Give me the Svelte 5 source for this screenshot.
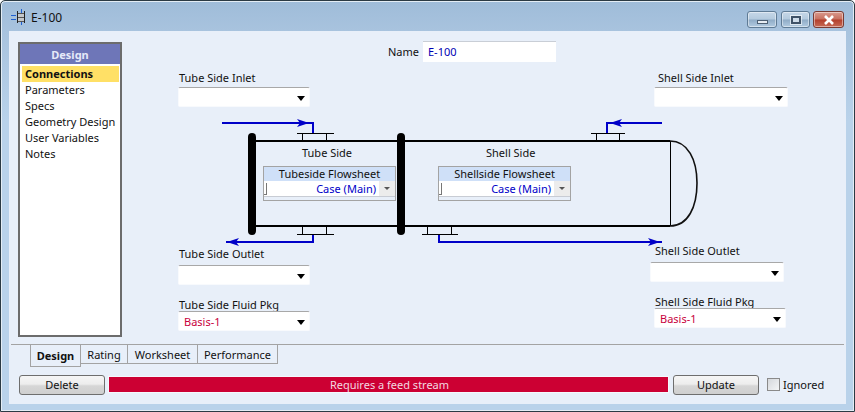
<script lang="ts">
	// canvas origin in page coords: x 122, y 31
	const combos = [
		{ label: 'Tube Side Inlet', lx: 57, ly: 39, x: 56, y: 56, w: 132, h: 20, value: '' },
		{ label: 'Shell Side Inlet', lx: 536, ly: 39, x: 532, y: 56, w: 134, h: 20, value: '' },
		{ label: 'Tube Side Outlet', lx: 57, ly: 215, x: 56, y: 234, w: 132, h: 20, value: '' },
		{ label: 'Tube Side Fluid Pkg', lx: 57, ly: 266, x: 56, y: 280, w: 132, h: 20, value: 'Basis-1' },
		{ label: 'Shell Side Outlet', lx: 533, ly: 212, x: 528, y: 231, w: 134, h: 20, value: '' },
		{ label: 'Shell Side Fluid Pkg', lx: 533, ly: 263, x: 532, y: 277, w: 132, h: 20, value: 'Basis-1' }
	];
	const flowsheets = [
		{ title: 'Tubeside Flowsheet', x: 141, y: 135 },
		{ title: 'Shellside Flowsheet', x: 316, y: 135 }
	];
	const menu = ['Connections', 'Parameters', 'Specs', 'Geometry Design', 'User Variables', 'Notes'];
	const tabs = [
		{ name: 'Design', w: 51 },
		{ name: 'Rating', w: 48 },
		{ name: 'Worksheet', w: 71 },
		{ name: 'Performance', w: 81 }
	];
</script>

<div class="window">
	<header class="titlebar">
		<svg class="app-icon" width="16" height="18" viewBox="0 0 16 18">
			<rect x="6" y="6" width="8" height="7" fill="#c4c8cc" />
			<path d="M6 5.500h8M6 13.500h8M6 9.500h8" stroke="#555" fill="none" />
			<path d="M6.500 3v12M13.500 3v12" stroke="#222" fill="none" />
			<path d="M10.500 1v4M10.500 14v3M0 7.500h5M0 11.500h5" stroke="#1f5fd0" fill="none" />
		</svg>
		<span class="title">E-100</span>
		<div class="controls">
			<div class="ctl"><span class="min"></span></div>
			<div class="ctl"><span class="max"></span></div>
			<div class="ctl close">
				<svg width="14" height="10" viewBox="0 0 14 10"><path d="M3 1l8 8M11 1l-8 8" stroke="#fff" stroke-width="2.6" fill="none" /></svg>
			</div>
		</div>
	</header>

	<main class="panel">
		<div class="design">
			<nav class="side">
				<div class="side-head">Design</div>
				<ul>
					{#each menu as item, i}
						<li class:active={i === 0}>{item}</li>
					{/each}
				</ul>
			</nav>

			<div class="canvas">
				<svg class="pid" width="724" height="313" viewBox="122 31 724 313" fill="none">
					<!-- vessel -->
					<path d="M252 141H670M252 226H670" stroke="#000" stroke-width="2" />
					<path d="M670.500 141V226" stroke="#000" />
					<path d="M670 141C688 141 697 160 697 183C697 207 688 226 670 226" stroke="#111" stroke-width="1.6" />
					<rect x="248" y="133" width="8" height="102" rx="4" fill="#000" />
					<rect x="397" y="133" width="8" height="102" rx="4" fill="#000" />
					<!-- nozzles -->
					<path d="M297 133.500H334M302.500 133V141M326.500 133V141" stroke="#000" />
					<path d="M297 234.500H334M302.500 226V234M326.500 226V234" stroke="#000" />
					<path d="M591 133.500H625M596.500 133V141M619.500 133V141" stroke="#000" />
					<path d="M422 234.500H458M427.500 226V234M451.500 226V234" stroke="#000" />
					<!-- streams -->
					<g stroke="#0000c8" stroke-width="2">
						<path d="M222 123H313V133" />
						<path d="M313 235V242H226" />
						<path d="M607 133V123H662" />
						<path d="M439 235V242H662" />
					</g>
					<g fill="#0000c8">
						<path d="M297 119L309 123L297 127L300 123Z" />
						<path d="M239 238L227 242L239 246L236 242Z" />
						<path d="M622 119L610 123L622 127L619 123Z" />
						<path d="M648 238L660 242L648 246L651 242Z" />
					</g>
				</svg>

				<span class="lbl name-lbl">Name</span>
				<div class="name-input">E-100</div>
				<span class="lbl side-lbl tube">Tube Side</span>
				<span class="lbl side-lbl shell">Shell Side</span>

				{#each flowsheets as f}
					<div class="flowsheet" style="left:{f.x}px;top:{f.y}px">
						<div class="fs-head">{f.title}</div>
						<div class="fs-row">
							<span class="caret"></span>
							<span class="fs-value">Case (Main)</span>
							<span class="fs-btn"></span>
						</div>
					</div>
				{/each}

				{#each combos as c}
					<span class="lbl" style="left:{c.lx}px;top:{c.ly}px">{c.label}</span>
					<div class="combo" style="left:{c.x}px;top:{c.y}px;width:{c.w}px;height:{c.h}px">
						<span class="combo-val">{c.value}</span>
						<span class="arrow"></span>
					</div>
				{/each}
			</div>
		</div>

		<div class="tabs">
			{#each tabs as t, i}
				<div class="tab" class:on={i === 0} style="width:{t.w}px">{t.name}</div>
			{/each}
		</div>

		<footer class="foot">
			<button type="button" class="btn">Delete</button>
			<div class="status">Requires a feed stream</div>
			<button type="button" class="btn">Update</button>
			<label class="ignored"><span class="box"></span>Ignored</label>
		</footer>
	</main>
</div>

<style>
	:global(body) {
		margin: 0;
		background: #fff;
	}

	.window {
		box-sizing: border-box;
		width: 855px;
		height: 412px;
		display: flex;
		flex-direction: column;
		border: 1px solid #2b3a44;
		border-radius: 5px 5px 0 0;
		background: linear-gradient(180deg, #9fbcd9 0, #a8c3de 30px, #b9d2ea 120px, #b9d2ea 100%);
		box-shadow: inset 0 0 0 1px #e4edf5;
		padding: 0 8px 7px 8px;
		font-family: 'Noto Sans', Tahoma, sans-serif;
		font-size: 11px;
		color: #111;
	}

	.titlebar {
		height: 30px;
		flex: none;
		display: flex;
		align-items: center;
		position: relative;
	}

	.app-icon {
		margin: 2px 4px 0 2px;
	}

	.title {
		font-size: 12px;
		margin-top: 2px;
	}

	.controls {
		margin-left: auto;
		margin-right: 2px;
		margin-top: 10px;
		display: flex;
		gap: 3px;
		align-self: flex-start;
	}

	.ctl {
		box-sizing: border-box;
		width: 30px;
		height: 17px;
		border: 1px solid #5f7b95;
		border-radius: 3px;
		background: linear-gradient(180deg, #c6d7e8 0, #b4cade 48%, #8fabc6 52%, #b2cbe1 100%);
		box-shadow: inset 0 0 0 1px rgb(255 255 255 / 0.45);
		display: flex;
		align-items: center;
		justify-content: center;
	}

	.ctl:nth-child(2) {
		width: 29px;
		margin-left: 1px;
	}

	.close {
		width: 31px;
		border-color: #7a3b33;
		background: linear-gradient(180deg, #d99a8e 0, #c8705f 48%, #b33f2c 52%, #c66a55 100%);
	}

	.min {
		width: 11px;
		height: 4px;
		margin-top: 4px;
		box-sizing: border-box;
		background: #e8eef4;
		border: 1px solid #4d6074;
	}

	.max {
		width: 10px;
		height: 8px;
		box-sizing: border-box;
		border: 2px solid #3f5267;
		background: #cfdce9;
		outline: 1px solid rgb(255 255 255 / 0.6);
	}

	.panel {
		flex: 1;
		display: flex;
		flex-direction: column;
		background: #e8eff9;
		min-height: 0;
	}

	.design {
		height: 313px;
		flex: none;
		display: flex;
		padding-left: 9px;
		box-sizing: border-box;
	}

	.side {
		box-sizing: border-box;
		width: 104px;
		height: 295px;
		margin-top: 11px;
		flex: none;
		border: 2px solid #6c6c6c;
		border-width: 1px 2px 2px 2px;
		background: #fff;
	}

	.side-head {
		height: 21px;
		margin-bottom: 1px;
		border-top: 1px solid #6c6c6c;
		box-sizing: border-box;
		background: #6e76b8;
		color: #e6eaf8;
		font-weight: 700;
		text-align: center;
		line-height: 21px;
	}

	ul {
		list-style: none;
		margin: 0;
		padding: 1px 1px 0 2px;
	}

	li {
		height: 16px;
		line-height: 15px;
		padding-left: 3px;
	}

	li.active {
		background: #ffe066;
		font-weight: 700;
	}

	.canvas {
		position: relative;
		flex: 1;
	}

	.pid {
		position: absolute;
		left: 0;
		top: 0;
	}

	.lbl {
		position: absolute;
		white-space: nowrap;
		line-height: 15px;
	}

	.name-lbl {
		left: 266px;
		top: 13px;
	}

	.tube {
		left: 180px;
		top: 114px;
	}

	.shell {
		left: 364px;
		top: 114px;
	}

	.name-input {
		position: absolute;
		left: 301px;
		top: 10px;
		box-sizing: border-box;
		width: 133px;
		height: 21px;
		background: #fff;
		border-top: 1px solid #c9ced6;
		color: #0000b4;
		padding-left: 5px;
		line-height: 20px;
	}

	.combo {
		position: absolute;
		box-sizing: border-box;
		background: #fff;
		border: 1px solid #f8fafd;
		border-top-color: #a8a8a8;
		border-radius: 2px;
		display: flex;
		align-items: center;
		padding-left: 5px;
	}

	.combo-val {
		color: #c8003c;
	}

	.arrow {
		position: absolute;
		right: 4px;
		top: 8px;
		width: 0;
		height: 0;
		border-left: 4px solid transparent;
		border-right: 4px solid transparent;
		border-top: 5px solid #000;
	}

	.flowsheet {
		position: absolute;
		box-sizing: border-box;
		width: 133px;
		height: 35px;
		border: 1px solid #a3a3a3;
		background: #e8eff9;
	}

	.fs-head {
		height: 14px;
		background: #cfe0f8;
		text-align: center;
		line-height: 13px;
	}

	.fs-row {
		height: 15px;
		margin-bottom: 1px;
		background: #fff;
		border-bottom: 1px solid #c8ccd4;
		display: flex;
		align-items: center;
	}

	.caret {
		width: 2px;
		height: 11px;
		margin-left: 0;
		border-right: 1px solid #777;
		border-bottom: 1px solid #777;
	}

	.fs-value {
		margin-left: auto;
		color: #0000c8;
		margin-right: 3px;
	}

	.fs-btn {
		position: relative;
		width: 16px;
		height: 15px;
		background: #ececec;
	}

	.fs-btn::after {
		content: '';
		position: absolute;
		left: 5px;
		top: 6px;
		border-left: 3.5px solid transparent;
		border-right: 3.5px solid transparent;
		border-top: 3px solid #555;
	}

	.tabs {
		height: 31px;
		flex: none;
		box-sizing: border-box;
		display: flex;
		align-items: flex-start;
		margin: 0 2px;
		padding-left: 19px;
		border-top: 1px solid #a3a3a3;
	}

	.tab {
		box-sizing: border-box;
		height: 19px;
		line-height: 20px;
		text-align: center;
		border: 1px solid #a3a3a3;
		border-top: 0;
		margin-left: -1px;
		white-space: nowrap;
	}

	.tab.on {
		height: 22px;
		padding-top: 1px;
		font-weight: 700;
		margin-left: 0;
		background: #e8eff9;
	}

	.foot {
		display: flex;
		align-items: center;
		height: 19px;
		padding-left: 10px;
	}

	.btn {
		box-sizing: border-box;
		width: 86px;
		height: 20px;
		padding: 0;
		border: 1px solid #6e6e6e;
		border-radius: 3px;
		background: linear-gradient(180deg, #f6f6f6 0, #ededed 45%, #d6d6d6 55%, #cfcfcf 100%);
		font: inherit;
		color: #111;
	}

	.status {
		box-sizing: border-box;
		width: 559px;
		height: 15px;
		margin: 0 5px 0 4px;
		padding-left: 2px;
		background: #cc0033;
		color: #f2d9e0;
		text-align: center;
		line-height: 15px;
		outline: 1px solid #f5f8fc;
	}

	.ignored {
		display: flex;
		align-items: center;
		margin-left: 8px;
	}

	.box {
		box-sizing: border-box;
		width: 13px;
		height: 13px;
		margin-right: 3px;
		border: 1px solid #8a8a8a;
		background: linear-gradient(135deg, #d5d8dc, #f4f5f6);
	}
</style>
